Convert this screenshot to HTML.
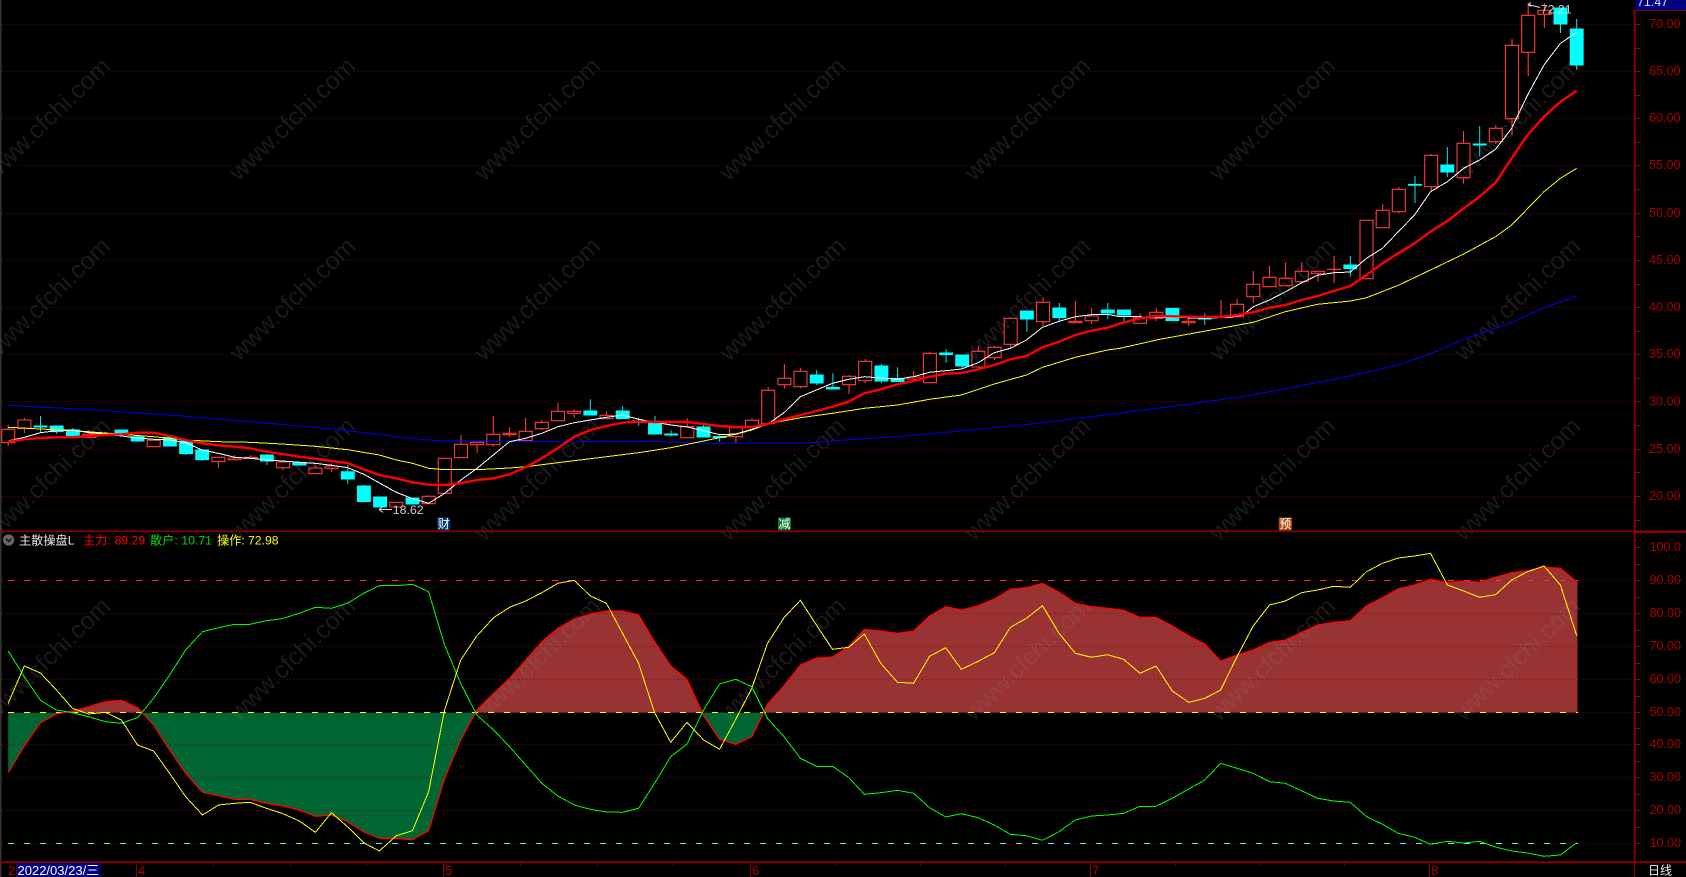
<!DOCTYPE html>
<html>
<head>
<meta charset="utf-8">
<title>主散操盘L</title>
<style>
html,body{margin:0;padding:0;background:#000;width:1686px;height:877px;overflow:hidden}
svg{display:block;position:absolute;left:0;top:0}
text{font-family:"Liberation Sans","Noto Sans CJK SC",sans-serif}
.wm text{font-size:24.8px;fill:rgba(128,128,128,.2);text-anchor:middle}
.ax text{font-size:12.6px;fill:#a80000;dominant-baseline:central}
.hd text{font-size:12.2px;dominant-baseline:central}
.mk text{font-size:12px;fill:#fff;text-anchor:middle;dominant-baseline:central}
.mo text{font-size:13px;fill:#b00000;dominant-baseline:central}
</style>
</head>
<body>
<svg width="1686" height="877" viewBox="0 0 1686 877" xmlns="http://www.w3.org/2000/svg">
<defs>
<clipPath id="up"><rect x="0" y="532" width="1634" height="180.7"/></clipPath>
<clipPath id="dn"><rect x="0" y="712.7" width="1634" height="149"/></clipPath>
</defs>
<rect width="1686" height="877" fill="#000"/>
<rect x="0" y="0" width="1.6" height="877" fill="#333"/>

<!-- lower fill -->
<g>
<path id="f1" clip-path="url(#up)" fill="#993333" d="M8.2 712.7L8.2 772.7 24.3 746 40.4 722.7 56.4 714 72.5 711 88.6 706.7 105.4 701.7 121.4 700.3 137.5 707.7 153.6 725 169.6 750 185.7 773.3 202.5 792.3 218.6 795.7 234.6 799.3 250 799.3 266.4 803.3 282 805.7 299.3 810 315.4 816.3 331.4 815 347.5 821.7 363.6 831.7 379.3 838.3 396.4 838.3 412.5 839.7 428.6 830.7 444.6 778.3 460.7 740 476.8 710 493.6 693.3 509.6 678.3 525.7 660 541.8 641.7 557.9 628.3 574.3 619 590.4 614 606.4 611 622.5 611 638.6 615 654.6 641.7 670.7 665.7 687 679.3 703.6 715.7 719.6 739.3 735.7 744.3 751.8 736.7 767.5 704.3 784 685.7 800.4 665 816.4 658 832.5 657 848.6 646.7 864.3 629.3 880.7 631 897.5 633.3 913.6 631 929.6 616 945.7 606.7 961.4 610 978.2 605.7 994.3 599 1010.4 589.3 1026.4 587.7 1042.5 583.3 1059 592 1075.4 603.3 1091.4 606.7 1107.5 608.3 1123.6 610.3 1140 617.3 1156 617.3 1172.3 626 1188.6 635.7 1204.8 644 1220.7 661 1237 655 1253.2 650 1269.5 642.3 1285.3 640 1301.6 632.3 1317.5 625 1333.7 622.3 1350.3 620.7 1366.6 605.7 1382.5 597.7 1398.3 588.7 1414.6 585 1430.5 579.3 1447.4 582.7 1463.7 581 1479.6 582.3 1495.5 577.3 1511.7 572.7 1527.6 570.7 1544 567.3 1560.4 568.3 1576.7 581.7 1577.5 581.7 1577.5 712.7Z"/>
<path clip-path="url(#dn)" fill="#006633" d="M8.2 712.7L8.2 772.7 24.3 746 40.4 722.7 56.4 714 72.5 711 88.6 706.7 105.4 701.7 121.4 700.3 137.5 707.7 153.6 725 169.6 750 185.7 773.3 202.5 792.3 218.6 795.7 234.6 799.3 250 799.3 266.4 803.3 282 805.7 299.3 810 315.4 816.3 331.4 815 347.5 821.7 363.6 831.7 379.3 838.3 396.4 838.3 412.5 839.7 428.6 830.7 444.6 778.3 460.7 740 476.8 710 493.6 693.3 509.6 678.3 525.7 660 541.8 641.7 557.9 628.3 574.3 619 590.4 614 606.4 611 622.5 611 638.6 615 654.6 641.7 670.7 665.7 687 679.3 703.6 715.7 719.6 739.3 735.7 744.3 751.8 736.7 767.5 704.3 784 685.7 800.4 665 816.4 658 1577.5 658 1577.5 712.7Z"/>
</g>

<!-- watermark -->
<g class="wm">
<text transform="translate(53 125) rotate(-44)">www.cfchi.com</text>
<text transform="translate(298 125) rotate(-44)">www.cfchi.com</text>
<text transform="translate(543 125) rotate(-44)">www.cfchi.com</text>
<text transform="translate(788 125) rotate(-44)">www.cfchi.com</text>
<text transform="translate(1033 125) rotate(-44)">www.cfchi.com</text>
<text transform="translate(1278 125) rotate(-44)">www.cfchi.com</text>
<text transform="translate(1523 125) rotate(-44)">www.cfchi.com</text>
<text transform="translate(53 305) rotate(-44)">www.cfchi.com</text>
<text transform="translate(298 305) rotate(-44)">www.cfchi.com</text>
<text transform="translate(543 305) rotate(-44)">www.cfchi.com</text>
<text transform="translate(788 305) rotate(-44)">www.cfchi.com</text>
<text transform="translate(1033 305) rotate(-44)">www.cfchi.com</text>
<text transform="translate(1278 305) rotate(-44)">www.cfchi.com</text>
<text transform="translate(1523 305) rotate(-44)">www.cfchi.com</text>
<text transform="translate(53 485) rotate(-44)">www.cfchi.com</text>
<text transform="translate(298 485) rotate(-44)">www.cfchi.com</text>
<text transform="translate(543 485) rotate(-44)">www.cfchi.com</text>
<text transform="translate(788 485) rotate(-44)">www.cfchi.com</text>
<text transform="translate(1033 485) rotate(-44)">www.cfchi.com</text>
<text transform="translate(1278 485) rotate(-44)">www.cfchi.com</text>
<text transform="translate(1523 485) rotate(-44)">www.cfchi.com</text>
<text transform="translate(53 665) rotate(-44)">www.cfchi.com</text>
<text transform="translate(298 665) rotate(-44)">www.cfchi.com</text>
<text transform="translate(543 665) rotate(-44)">www.cfchi.com</text>
<text transform="translate(788 665) rotate(-44)">www.cfchi.com</text>
<text transform="translate(1033 665) rotate(-44)">www.cfchi.com</text>
<text transform="translate(1278 665) rotate(-44)">www.cfchi.com</text>
<text transform="translate(1523 665) rotate(-44)">www.cfchi.com</text>
</g>

<!-- grid -->
<path stroke="#860000" stroke-width="1" stroke-dasharray="1 3" fill="none" shape-rendering="crispEdges" d="M2 24.5H1634M2 71.5H1634M2 118.5H1634M2 165.5H1634M2 213.5H1634M2 260.5H1634M2 307.5H1634M2 354.5H1634M2 401.5H1634M2 449.5H1634M2 496.5H1634M2 580.5H1634M2 613.5H1634M2 646.5H1634M2 679.5H1634M2 712.5H1634M2 744.5H1634M2 777.5H1634M2 810.5H1634M2 843.5H1634"/>
<path stroke="#ff3333" stroke-width="1" stroke-dasharray="6 10" fill="none" shape-rendering="crispEdges" d="M8 580.5H1578"/>
<path stroke="#ffff00" stroke-width="1" stroke-dasharray="6 10" fill="none" shape-rendering="crispEdges" d="M8 712.5H1578"/>
<path stroke="#33ffff" stroke-width="1" stroke-dasharray="6 10" fill="none" shape-rendering="crispEdges" d="M8 843.5H1578"/>

<!-- candles -->
<path fill="#00ffff" stroke="#00ffff" stroke-width=".9" d="M40.5 416V431.7M34 426h13v1h-13zM56.7 426V434M50.2 426h13v5.7h-13zM72.9 428V437M66.4 430h13v5.7h-13zM121.4 430V435M114.9 430h13v4.3h-13zM137.6 435V442M131.1 436.7h13v4.3h-13zM169.9 436.7V446M163.4 437.3h13v8.7h-13zM186.1 441V455M179.6 441h13v12.7h-13zM202.2 450V461M195.7 450h13v9.7h-13zM266.9 454V465M260.4 455h13v6h-13zM299.3 461V465M292.8 463h13v2h-13zM347.8 465V483.7M341.3 471.7h13v7.3h-13zM363.9 485V502M357.4 486h13v15.7h-13zM373.6 497h13v10h-13zM406 498h13v6h-13zM590.3 399.3V415M583.8 411h13v4h-13zM622.7 406V418.7M616.2 411h13v7.7h-13zM638.8 417.7V425.7M632.3 421h13v1.5h-13zM655 416V434M648.5 422.3h13v11.7h-13zM671.2 430.7V436M664.7 434h13v1h-13zM697 427h13v10h-13zM703.5 425V427M719.7 434V442M713.2 436.5h13v1h-13zM816.7 370V385M810.2 375h13v8h-13zM832.9 373.3V389M826.4 387.3h13v1.7h-13zM881.4 364V383M874.9 366h13v15h-13zM897.6 367.3V381.7M891.1 378.3h13v3.4h-13zM946.1 349V362.7M939.6 353h13v1.7h-13zM962.2 355V369.3M955.7 355h13v11h-13zM1026.9 311V331.7M1020.4 311h13v8h-13zM1059.3 303V321.7M1052.8 308h13v9.7h-13zM1107.8 303V318.7M1101.3 310h13v3h-13zM1124 310V321M1117.5 310h13v5h-13zM1165.9 308.3h13v12.4h-13zM1204.8 313.3V325M1198.3 318h13v1h-13zM1350.3 256V276.7M1343.8 265h13v3.7h-13zM1415 176V203M1408.5 184.3h13v1h-13zM1447.3 147V177M1440.8 165h13v7h-13zM1479.7 126V156M1473.2 144h13v1h-13zM1560.5 8V33M1554 8h13v16h-13zM1576.7 19V70M1570.2 29h13v36h-13z"/>
<path fill="none" stroke="#ff3b3b" stroke-width="1.1" d="M8.2 425V429.3M8.2 442.7V445.7M1.7 429.3h13v13.4h-13zM24.4 418V420M24.4 428.3V433M17.9 420h13v8.3h-13zM89.1 430V434.3M82.6 434.3h13v3h-13zM105.2 431.7V433.3M98.7 433.3h13v2h-13zM147.2 440.3h13v6.4h-13zM218.4 461.7V468M211.9 457.3h13v4.4h-13zM234.6 455.3V458M228.1 458h13v1.7h-13zM250.8 455.3V457.3M244.3 457.3h13v1h-13zM283.1 467.7V470M276.6 462h13v5.7h-13zM315.4 465.3V468M308.9 468h13v5.7h-13zM331.6 463.3V466M331.6 468.3V472M325.1 466h13v2.3h-13zM389.8 502.3h13v4.7h-13zM428.6 495.3V496.3M422.1 496.3h13v7.4h-13zM438.3 458.3h13v35h-13zM461 435V444.3M454.5 444.3h13v13.4h-13zM477.1 444.7V452.7M470.6 442.3h13v2.4h-13zM493.3 416V434.3M493.3 444.7V446.7M486.8 434.3h13v10.4h-13zM509.5 427.3V433.3M509.5 434.7V436.7M503 433.3h13v1.4h-13zM525.6 418V431.3M519.1 431.3h13v9.4h-13zM541.8 420V422.3M541.8 428.7V430M535.3 422.3h13v6.4h-13zM558 403.3V411.3M551.5 411.3h13v9.4h-13zM574.2 409.3V411.3M574.2 413.3V417.7M567.7 411.3h13v2h-13zM606.5 411.3V415.3M600 415.3h13v3.4h-13zM687.3 418.3V426.7M680.8 426.7h13v11h-13zM735.9 436.7V442.7M729.4 427.7h13v9h-13zM752 418.3V420.3M745.5 420.3h13v6.7h-13zM768.2 386.7V390.3M761.7 390.3h13v33.4h-13zM784.4 364V378.3M784.4 384.7V388.7M777.9 378.3h13v6.4h-13zM800.5 368.3V371.3M800.5 386.7V388.3M794 371.3h13v15.4h-13zM849 375V376.3M849 384.7V394M842.5 376.3h13v8.4h-13zM865.2 359V361.3M865.2 380.7V383.3M858.7 361.3h13v19.4h-13zM913.7 371V377M913.7 379V381.7M907.2 377h13v2h-13zM929.9 352V353.3M923.4 353.3h13v29.4h-13zM978.4 346V351.3M978.4 367V369.3M971.9 351.3h13v15.7h-13zM994.6 346V347.3M994.6 357.7V360M988.1 347.3h13v10.4h-13zM1010.7 317.3V318.3M1010.7 344.3V349.3M1004.2 318.3h13v26h-13zM1043.1 297.3V302.3M1043.1 321.7V326M1036.6 302.3h13v19.4h-13zM1075.4 301V321.3M1068.9 321.3h13v1.4h-13zM1091.6 308.3V316M1091.6 320.7V324M1085.1 316h13v4.7h-13zM1140.1 313.3V317.7M1133.6 317.7h13v5.6h-13zM1156.3 308.3V312.3M1156.3 318.3V321M1149.8 312.3h13v6h-13zM1188.6 316.7V321.3M1188.6 322.7V325.7M1182.1 321.3h13v1.4h-13zM1221 300V316.5M1214.5 316.5h13v1h-13zM1237.1 299V304.3M1230.6 304.3h13v12.4h-13zM1253.3 271V284.3M1253.3 296.7V303.3M1246.8 284.3h13v12.4h-13zM1269.5 266V277.3M1263 277.3h13v9.4h-13zM1285.6 262.3V278.3M1279.1 278.3h13v7.4h-13zM1301.8 262V271.3M1295.3 271.3h13v10.4h-13zM1318 273.3V281.7M1311.5 271.3h13v2h-13zM1334.1 256V282.7M1327.6 269.3h13v.2h-13zM1360 220.3h13v58.4h-13zM1382.7 204V210.3M1376.2 210.3h13v17.4h-13zM1398.8 187V189.3M1398.8 211.7V213.3M1392.3 189.3h13v22.4h-13zM1431.2 154V155.3M1431.2 186.7V191.7M1424.7 155.3h13v31.4h-13zM1463.5 131V143.3M1463.5 177.7V183.7M1457 143.3h13v34.4h-13zM1495.8 125V128.3M1495.8 141.7V144M1489.3 128.3h13v13.4h-13zM1512 39V45.3M1512 118.7V135M1505.5 45.3h13v73.4h-13zM1528.2 3.3V15.3M1528.2 52.3V76M1521.7 15.3h13v37h-13zM1544.4 3V10.3M1544.4 14.3V28M1537.9 10.3h13v4h-13z"/>

<!-- moving averages -->
<polyline fill="none" stroke="#0000ee" stroke-width="1" shape-rendering="crispEdges" points="8.2,405.3 32,406.7 65.4,408.3 97,410 130.4,412.3 178.6,415.7 221.4,419.3 257,422.3 296.4,425.7 335.7,429.3 375,434 421.4,439.3 437.5,440.7 500,441.3 560,441.7 663.6,441.7 711.8,443.3 806.4,443 845.7,440 895.7,436.7 952.9,431.7 1024.3,424.7 1120,413.3 1183,405 1240,397 1290,388 1350,376 1398,365 1430,354 1459.4,341 1495.5,328.3 1513.5,321.7 1542.4,308.3 1576.7,296"/>
<polyline fill="none" stroke="#ffff00" stroke-width="1" shape-rendering="crispEdges" points="8.2,427.3 40.4,429 72.5,430.5 121.4,434.3 153.6,436.7 185.7,440 218.6,441.7 250,442.3 282,444 315.4,446.3 347.5,449.7 379.3,455 396.4,460 412.5,463.3 428.6,468.3 444.6,469.7 476.8,469.7 509.6,468 525.7,466.7 557.9,462.7 606.4,456.7 638.6,452.7 670.7,447.7 703.6,441 735.7,434.3 751.8,430 767.5,424 800.4,417.7 832.5,413.3 864.3,408.3 897.5,405 929.6,399.3 961.4,395 994.3,384 1026.4,375 1042.5,367.3 1075.4,357.3 1107.5,350 1120,348.3 1159.7,339.3 1220.7,328.3 1253.2,322.3 1285.3,311.7 1317.5,304.3 1350.3,301 1366.6,297.7 1398.3,285.3 1430.5,270 1463.7,254 1495.5,236.7 1511.7,225 1544,191.7 1560.4,178.3 1576.7,168.3"/>
<polyline fill="none" stroke="#ffffff" stroke-width="1" shape-rendering="crispEdges" points="8,441 24.4,437.3 40.5,432.7 56.7,430.7 72.9,430 89,432.7 105,434 121.4,436 137.6,438 154,439.3 170,440 186,442.7 202,450 218.4,453.3 234.6,457.3 250.8,458.3 266.9,460 283,461 299,462.3 315,463.3 331.6,465.3 347.8,467.7 363.9,474.3 380,483.3 396.3,492.3 412.5,498.7 428.6,503.3 444.8,493.3 461,480 477,468.3 493.3,455 509.5,441.7 525.6,438.3 541.8,433.3 558,426.7 574.2,422.7 590.3,420 606.5,417.3 622.7,415 638.8,419.3 655,422.3 671.2,425 687.3,427 703.5,430.7 719.7,434.7 735.9,434 751.8,429.3 767.5,424.3 784,412.7 800.4,396.7 816.4,390 832.5,383.3 848.6,379.3 864.3,376.7 880.7,378 897.5,379.3 913.6,376.7 929.6,372.3 945.7,370.7 961.4,369 978.2,362.7 994.3,352.7 1010.4,348.3 1026.4,340 1042.5,327.3 1059,321.3 1075.4,316.7 1091.4,314.7 1107.5,314.3 1120,316.7 1140,316.7 1156,317.3 1204,318 1230,317.5 1243,315 1253.3,306.7 1269.5,300 1285.6,291.7 1301.8,282.7 1317.5,275.3 1333.7,272.7 1350.3,272 1366.5,258.3 1382.5,248.3 1398.3,231.7 1414.6,215 1430.5,191.7 1447.4,181.7 1463.7,168.3 1479.6,160 1495.5,149.3 1511.7,128.3 1527.6,95 1544,65 1560.4,43.3 1576.7,32.3"/>
<polyline fill="none" stroke="#ff0000" stroke-width="2.4" stroke-linejoin="round" points="8,441.7 24.3,439.3 40.4,438 56.4,437.3 72.5,437.3 88.6,436 105.4,435 121.4,434.3 137.5,432.7 153.6,432.7 169.6,436 185.7,440 202.5,443.3 218.6,445.3 234.6,446.7 250,448.3 266.4,451.7 282,454 299.3,456.7 315.4,458.7 331.4,461 347.5,463 363.6,469.3 379.3,475 396.4,478.3 412.5,482.3 428.6,484.7 444.6,485 460.7,483.3 476.8,480 493.6,478.3 509.6,474.3 525.7,467.3 541.8,458.3 557.9,448 574.3,436.7 590.4,430 606.4,426 622.5,422.7 638.6,421.7 654.6,422 670.7,422 687,422 703.6,424 719.6,426 735.7,427 751.8,427 767.5,424 784,419.3 800.4,415 816.4,411 832.5,406.7 848.6,401.7 864.3,393.3 880.7,389.3 897.5,384.3 913.6,381 929.6,376.7 945.7,373.7 961.4,373 978.2,369.3 994.3,365 1010.4,359.3 1026.4,356 1042.5,347.3 1059,341.7 1075.4,335 1091.4,330.7 1107.5,327.7 1120,323.5 1140,318.3 1156,316 1188.6,316.7 1221,317 1237,315 1253.2,312.3 1269.5,307.7 1285.3,305 1301.6,300 1317.5,296 1333.7,291 1350.3,286 1366.6,275 1382.5,263.3 1398.3,253.3 1414.6,243.3 1430.5,231.7 1447.4,221 1463.7,208.3 1479.6,196.7 1495.5,182.7 1511.7,158.3 1527.6,135 1544,116.7 1560.4,101.7 1576.7,90.7"/>

<!-- markers on candles -->
<g fill="none" stroke="#dddddd" stroke-width="1">
<path d="M379 509.5H392M379 509.5l4 -3M379 509.5l4 3"/>
<path d="M1528 4.5L1540 7.5M1528 4.5l3 -2M1528 4.5l3 2"/>
</g>
<text x="392.7" y="513.8" font-size="12.4" fill="#cccccc">18.62</text>
<text x="1540.7" y="13.7" font-size="12.4" fill="#f0f0f0" fill-opacity=".85">72.21</text>

<!-- lower indicators -->
<polyline fill="none" stroke="#ff0000" stroke-width="1.3" points="8.2,772.7 24.3,746 40.4,722.7 56.4,714 72.5,711 88.6,706.7 105.4,701.7 121.4,700.3 137.5,707.7 153.6,725 169.6,750 185.7,773.3 202.5,792.3 218.6,795.7 234.6,799.3 250,799.3 266.4,803.3 282,805.7 299.3,810 315.4,816.3 331.4,815 347.5,821.7 363.6,831.7 379.3,838.3 396.4,838.3 412.5,839.7 428.6,830.7 444.6,778.3 460.7,740 476.8,710 493.6,693.3 509.6,678.3 525.7,660 541.8,641.7 557.9,628.3 574.3,619 590.4,614 606.4,611 622.5,611 638.6,615 654.6,641.7 670.7,665.7 687,679.3 703.6,715.7 719.6,739.3 735.7,744.3 751.8,736.7 767.5,704.3 784,685.7 800.4,665 816.4,658 832.5,657 848.6,646.7 864.3,629.3 880.7,631 897.5,633.3 913.6,631 929.6,616 945.7,606.7 961.4,610 978.2,605.7 994.3,599 1010.4,589.3 1026.4,587.7 1042.5,583.3 1059,592 1075.4,603.3 1091.4,606.7 1107.5,608.3 1123.6,610.3 1140,617.3 1156,617.3 1172.3,626 1188.6,635.7 1204.8,644 1220.7,661 1237,655 1253.2,650 1269.5,642.3 1285.3,640 1301.6,632.3 1317.5,625 1333.7,622.3 1350.3,620.7 1366.6,605.7 1382.5,597.7 1398.3,588.7 1414.6,585 1430.5,579.3 1447.4,582.7 1463.7,581 1479.6,582.3 1495.5,577.3 1511.7,572.7 1527.6,570.7 1544,567.3 1560.4,568.3 1576.7,581.7"/>
<polyline fill="none" stroke="#00ff00" stroke-width="1" shape-rendering="crispEdges" points="8.2,651 24.3,676.7 40.4,700.3 56.4,710 72.5,712.7 88.6,716.7 105.4,721.7 121.4,723.3 137.5,717.7 153.6,698.3 169.6,675 185.7,650 202.5,631.7 218.6,627.7 234.6,624.3 250,624.3 266.4,620.7 282,618.7 299.3,613.3 315.4,607.3 331.4,608.3 347.5,603.3 363.6,593.3 379.3,585.7 396.4,585.7 412.5,584.3 428.6,591.7 444.6,645 460.7,683.3 476.8,715 493.6,730 509.6,746.7 525.7,765 541.8,783.3 557.9,796 574.3,805 590.4,809.3 606.4,812 622.5,812.3 638.6,808.3 654.6,783.3 670.7,756.7 687,744 703.6,710 719.6,684 735.7,679.3 751.8,686.7 767.5,718.3 784,736.7 800.4,758.3 816.4,766.3 832.5,766.3 848.6,777.3 864.3,794.3 880.7,792.7 897.5,790.3 913.6,793.3 929.6,807.7 945.7,817 961.4,813.7 978.2,817.7 994.3,825 1010.4,834.3 1026.4,835.7 1042.5,840.3 1059,831.7 1075.4,820 1091.4,816 1107.5,815 1123.6,813.3 1140,806.3 1156,806.3 1172.3,798.3 1188.6,789 1204.8,780 1220.7,763.3 1237,768.3 1253.2,773.3 1269.5,781.7 1285.3,783.3 1301.6,790.7 1317.5,798.3 1333.7,801 1350.3,802.3 1366.6,816.7 1382.5,824.3 1398.3,833.3 1414.6,837.3 1430.5,844.3 1447.4,841.3 1463.7,843 1479.6,841.3 1495.5,847 1511.7,851 1527.6,853 1544,856.3 1560.4,855 1576.7,842.7"/>
<polyline fill="none" stroke="#ffff00" stroke-width="1" shape-rendering="crispEdges" points="8.2,703.3 24.3,666 40.4,673 56.4,690 72.5,708.3 88.6,714 105.4,712.3 121.4,720 137.5,745 153.6,751 169.6,773.3 185.7,796.7 202.5,815 218.6,805 234.6,803.3 250,802.3 266.4,808.3 282,813.3 299.3,821 315.4,832.3 331.4,812.7 347.5,826.7 363.6,842.7 379.3,851 396.4,835.7 412.5,830.7 428.6,791.7 444.6,710 460.7,660 476.8,636 493.6,617.7 509.6,607.3 525.7,601 541.8,592.7 557.9,583.3 574.3,580.3 590.4,596 606.4,603.3 622.5,633.3 638.6,663.3 654.6,712.7 670.7,742.3 687,722.3 703.6,740 719.6,749.3 735.7,719.3 751.8,688.3 767.5,643.3 784,617.7 800.4,600.3 816.4,625 832.5,649.3 848.6,647.3 864.3,634 880.7,663.3 897.5,682.3 913.6,683.3 929.6,656.3 945.7,647.7 961.4,669.3 978.2,661.3 994.3,652.7 1010.4,627.3 1026.4,618.3 1042.5,605.7 1059,633.3 1075.4,653.3 1091.4,657.3 1107.5,654.7 1123.6,659.3 1140,673.3 1156,666 1172.3,691 1188.6,702.3 1204.8,698.3 1220.7,690 1237,656.7 1253.2,626 1269.5,605 1285.3,601 1301.6,592.7 1317.5,590 1333.7,586.3 1350.3,587.3 1366.6,571.7 1382.5,563.3 1398.3,558 1414.6,556 1430.5,553.3 1447.4,585 1463.7,591 1479.6,597.3 1495.5,594.7 1511.7,580 1527.6,571.7 1544,566 1560.4,585 1576.7,635.7"/>

<!-- event markers -->
<g class="mk">
<rect x="437.3" y="517.5" width="12.8" height="12.8" fill="#003a70"/>
<text x="443.7" y="524">财</text>
<rect x="778" y="517.5" width="13" height="12.8" fill="#0a7a2a"/>
<text x="784.5" y="524">减</text>
<rect x="1278.8" y="517.5" width="13" height="12.8" fill="#b04a0c"/>
<text x="1285.3" y="524">预</text>
</g>

<!-- frame -->
<g fill="none" stroke="#8b0000">
<path stroke-width="1.6" d="M0 531.3H1686"/>
<path stroke-width="2" d="M0 862.3H1686"/>
<path stroke-width="2" d="M1634.7 10V862"/>
<path stroke-width="1" d="M1635 532.5H1686M1634.5 862V877M1634 10.5H1686"/>
<path stroke-width="1" d="M1635 24.5h5M1635 48.5h5M1635 71.5h5M1635 95.5h5M1635 118.5h5M1635 142.5h5M1635 165.5h5M1635 189.5h5M1635 213.5h5M1635 236.5h5M1635 260.5h5M1635 284.5h5M1635 307.5h5M1635 331.5h5M1635 354.5h5M1635 378.5h5M1635 401.5h5M1635 425.5h5M1635 449.5h5M1635 472.5h5M1635 496.5h5M1635 520.5h5M1635 547.5h5M1635 564.5h5M1635 580.5h5M1635 597.5h5M1635 613.5h5M1635 630.5h5M1635 646.5h5M1635 663.5h5M1635 679.5h5M1635 696.5h5M1635 712.5h5M1635 728.5h5M1635 744.5h5M1635 761.5h5M1635 777.5h5M1635 794.5h5M1635 810.5h5M1635 827.5h5M1635 843.5h5"/>
<path stroke-width="1" d="M16.5 862V877M136.5 862V877M443.5 862V877M750.5 862V877M1090.5 862V877M1429.5 862V877"/>
<path stroke-width="1" d="M213.5 862V865.5M290.5 862V865.5M366.5 862V865.5M520.5 862V865.5M597.5 862V865.5M673.5 862V865.5M835.5 862V865.5M920.5 862V865.5M1005.5 862V865.5M1175.5 862V865.5M1260.5 862V865.5M1344.5 862V865.5"/>
</g>

<!-- top right box -->
<rect x="1635.5" y="0" width="50.5" height="10" fill="#000080"/>
<text x="1637" y="6" font-size="12.4" fill="#dde0ff">71.47</text>

<!-- axis labels -->
<g class="ax">
<text x="1649" y="24">70.00</text>
<text x="1649" y="71">65.00</text>
<text x="1649" y="118">60.00</text>
<text x="1649" y="165">55.00</text>
<text x="1649" y="213">50.00</text>
<text x="1649" y="260">45.00</text>
<text x="1649" y="307">40.00</text>
<text x="1649" y="354">35.00</text>
<text x="1649" y="401.5">30.00</text>
<text x="1649" y="449">25.00</text>
<text x="1649" y="496">20.00</text>
<text x="1649.5" y="547">100.0</text>
<text x="1649.5" y="580">90.00</text>
<text x="1649.5" y="613">80.00</text>
<text x="1649.5" y="646">70.00</text>
<text x="1649.5" y="679">60.00</text>
<text x="1649.5" y="712">50.00</text>
<text x="1649.5" y="744">40.00</text>
<text x="1649.5" y="777">30.00</text>
<text x="1649.5" y="810">20.00</text>
<text x="1649.5" y="843">10.00</text>
</g>

<!-- indicator header -->
<circle cx="8.6" cy="540" r="5.6" fill="#666"/>
<path d="M5.8 538.6L8.6 541.4 11.4 538.6" fill="none" stroke="#111" stroke-width="1.4"/>
<g class="hd">
<text x="19" y="540.5" fill="#e8e8e8">主散操盘L</text>
<text x="83" y="540.5" fill="#ff0000">主力:</text>
<text x="114.6" y="540.5" fill="#ff0000">89.29</text>
<text x="150" y="540.5" fill="#00dd00">散户:</text>
<text x="181.4" y="540.5" fill="#00dd00">10.71</text>
<text x="217" y="540.5" fill="#ffff00">操作:</text>
<text x="248" y="540.5" fill="#ffff00">72.98</text>
</g>

<!-- date axis -->
<rect x="16.5" y="863" width="84" height="14" fill="#000080"/>
<g class="mo">
<text x="8" y="870.5">2</text>
<text x="17.5" y="870.5" style="fill:#fff">2022/03/23/三</text>
<text x="138" y="870.5">4</text>
<text x="445" y="870.5">5</text>
<text x="752" y="870.5">6</text>
<text x="1092" y="870.5">7</text>
<text x="1431" y="870.5">8</text>
<text x="1648" y="870.5" style="fill:#eeeeee;font-size:12px">日线</text>
</g>
</svg>
</body>
</html>
